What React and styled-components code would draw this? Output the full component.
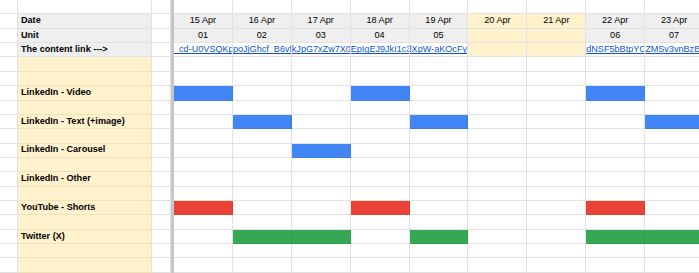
import styled, { createGlobalStyle } from 'styled-components';

const GlobalStyle = createGlobalStyle`
  html, body {
    margin: 0;
    padding: 0;
    background: #ffffff;
    overflow: hidden;
  }

  body {
    font-family: 'Liberation Sans', Arial, sans-serif;
  }
`;

const GRID = '#e2e2e2';
const YELLOW = '#fff2cc';
const GREY = '#efefef';

const BAR_COLORS = {
  blue: '#4285f4',
  red: '#ea4335',
  green: '#34a853'
};

const days = [
  { date: '15 Apr', unit: '01', link: '_cd-U0VSQKpoJ' },
  { date: '16 Apr', unit: '02', link: 'poJjGhcf_B6vfk' },
  { date: '17 Apr', unit: '03', link: 'kJpG7xZw7X0E' },
  { date: '18 Apr', unit: '04', link: 'EpIgEJ9JkI1c3' },
  { date: '19 Apr', unit: '05', link: 'lXpW-aKOcFy' },
  { date: '20 Apr', off: true },
  { date: '21 Apr', off: true },
  { date: '22 Apr', unit: '06', link: 'dNSF5bBtpYC' },
  { date: '23 Apr', unit: '07', link: 'ZMSv3vnBzBf' }
];

// body rows below the header; label rows carry the bars
const bodyRows = [
  {},
  {},
  { label: 'LinkedIn - Video', color: 'blue', on: [0, 3, 7] },
  {},
  { label: 'LinkedIn - Text (+image)', color: 'blue', on: [1, 4, 8] },
  {},
  { label: 'LinkedIn - Carousel', color: 'blue', on: [2] },
  {},
  { label: 'LinkedIn - Other', color: 'blue', on: [] },
  {},
  { label: 'YouTube - Shorts', color: 'red', on: [0, 3, 7] },
  {},
  { label: 'Twitter (X)', color: 'green', on: [1, 2, 4, 7, 8] },
  {},
  {}
];

export default function App() {
  return (
    <>
      <GlobalStyle />
      <Sheet>
        <FrozenLine />

        {/* row 0: blank */}
        <Cell />
        <Cell />
        <Cell />
        {days.map((d) => (
          <Cell key={`blank-${d.date}`} />
        ))}

        {/* header: date */}
        <Cell />
        <Cell $bg={GREY} $bold>
          Date
        </Cell>
        <Cell />
        {days.map((d) => (
          <Cell key={d.date} $bg={d.off ? YELLOW : GREY} $center>
            {d.date}
          </Cell>
        ))}

        {/* header: unit */}
        <Cell />
        <Cell $bg={GREY} $bold>
          Unit
        </Cell>
        <Cell />
        {days.map((d) => (
          <Cell key={`unit-${d.date}`} $bg={d.off ? YELLOW : GREY} $center>
            {d.unit}
          </Cell>
        ))}

        {/* header: links */}
        <Cell />
        <Cell $bg={GREY} $bold>
          The content link ---&gt;
        </Cell>
        <Cell />
        {days.map((d) => (
          <Cell key={`link-${d.date}`} $bg={d.off ? YELLOW : undefined} $flush>
            {d.link && <Link href="#">{d.link}</Link>}
          </Cell>
        ))}

        {bodyRows.map((row, i) => (
          <Row key={i} row={row} />
        ))}
      </Sheet>
    </>
  );
}

function Row({ row }) {
  const on = row.on || [];

  return (
    <>
      <Cell />
      <Cell $bg={YELLOW} $line="#f1e3b9" $bold>
        {row.label}
      </Cell>
      <Cell />
      {days.map((d, i) => (
        <Cell
          key={d.date}
          $bg={on.includes(i) ? BAR_COLORS[row.color] : undefined}
          $line={on.includes(i) ? 'rgba(0, 0, 0, 0.06)' : undefined}
        />
      ))}
    </>
  );
}

const Sheet = styled.div`
  display: grid;
  grid-template-columns: 18px 134px 19px 3px repeat(9, 58.9px);
  grid-template-rows: repeat(19, 14.37px);
  width: max-content;

  font-size: 9.1px;
  color: #000000;
`;

const FrozenLine = styled.div`
  grid-column: 4;
  grid-row: 1 / -1;

  background-color: #c6c6c6;
`;

const Cell = styled.div`
  box-sizing: border-box;
  min-width: 0;
  overflow: hidden;

  display: flex;
  align-items: flex-end;
  justify-content: ${(props) => (props.$center ? 'center' : 'flex-start')};
  padding: ${(props) => (props.$flush ? '0 0 1px' : '0 3px 1.5px')};

  background-color: ${(props) => props.$bg || '#ffffff'};
  border-right: 1px solid ${(props) => props.$line || GRID};
  border-bottom: 1px solid ${(props) => props.$line || GRID};

  font-weight: ${(props) => (props.$bold ? 700 : 400)};
  line-height: 11px;
  white-space: nowrap;
`;

const Link = styled.a`
  color: #1155cc;
  text-decoration: underline;
  white-space: nowrap;
`;
